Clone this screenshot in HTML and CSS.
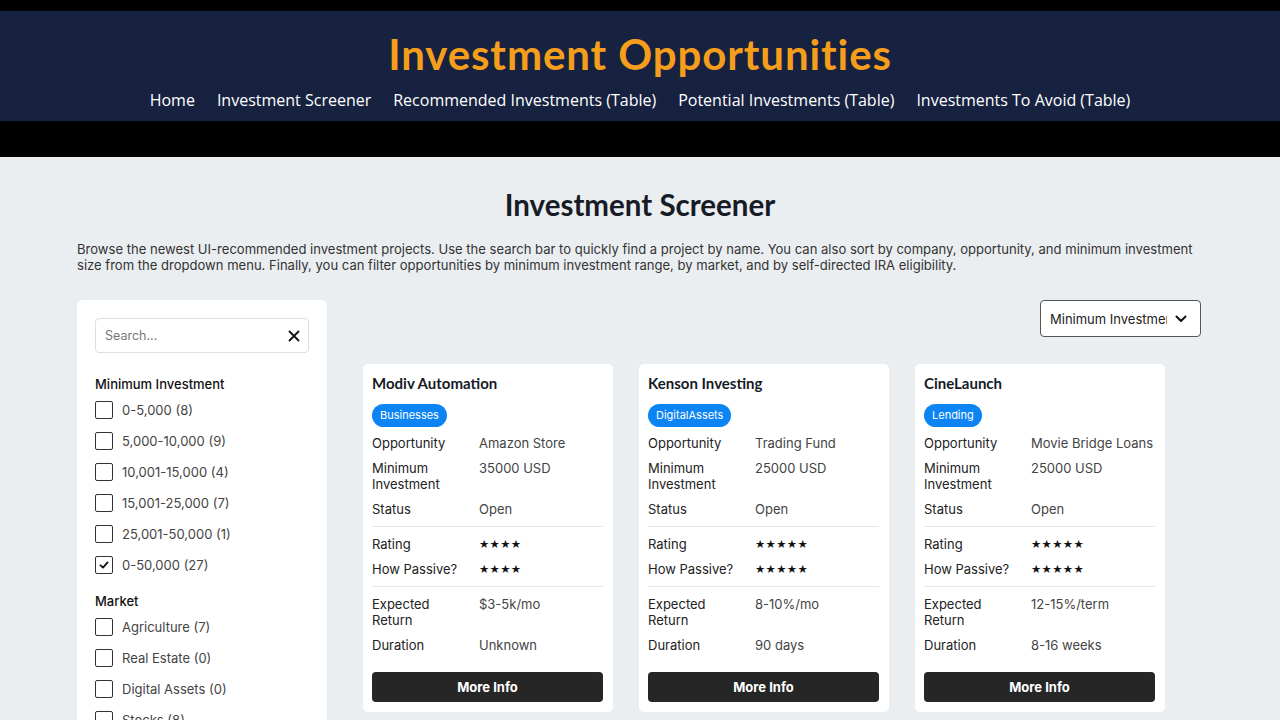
FILE: index.html
```html
<!DOCTYPE html>
<html lang="en">
<head>
<meta charset="utf-8">
<title>Investment Screener</title>
<link rel="stylesheet" href="styles.css">
</head>
<body>
<header class="site-header">
  <div class="topstrip"></div>
  <div class="brand-bar">
    <h1 class="brand-title">Investment Opportunities</h1>
    <nav class="main-nav">
      <a href="#">Home</a>
      <a href="#">Investment Screener</a>
      <a href="#">Recommended Investments (Table)</a>
      <a href="#">Potential Investments (Table)</a>
      <a href="#">Investments To Avoid (Table)</a>
    </nav>
  </div>
  <div class="bottomstrip"></div>
</header>

<main class="page">
  <h2 class="page-title">Investment Screener</h2>
  <p class="intro">Browse the newest UI-recommended investment projects. Use the search bar to quickly find a project by name. You can also sort by company, opportunity, and minimum investment size from the dropdown menu. Finally, you can filter opportunities by minimum investment range, by market, and by self-directed IRA eligibility.</p>

  <div class="layout">
    <aside class="filters">
      <div class="search">
        <span class="search-placeholder">Search...</span>
        <svg class="search-clear" width="12" height="12" viewBox="0 0 12 12"><path d="M1.5 1.5 L10.5 10.5 M10.5 1.5 L1.5 10.5" stroke="#111" stroke-width="1.8" stroke-linecap="round"/></svg>
      </div>

      <h3 class="filter-title">Minimum Investment</h3>
      <ul class="filter-list">
        <li><span class="box"></span>0-5,000 (8)</li>
        <li><span class="box"></span>5,000-10,000 (9)</li>
        <li><span class="box"></span>10,001-15,000 (4)</li>
        <li><span class="box"></span>15,001-25,000 (7)</li>
        <li><span class="box"></span>25,001-50,000 (1)</li>
        <li><span class="box checked"><svg width="12" height="12" viewBox="0 0 12 12"><path d="M2.5 6.3 L5 8.6 L9.6 3.4" fill="none" stroke="#111" stroke-width="1.8" stroke-linecap="round" stroke-linejoin="round"/></svg></span>0-50,000 (27)</li>
      </ul>

      <h3 class="filter-title market">Market</h3>
      <ul class="filter-list">
        <li><span class="box"></span>Agriculture (7)</li>
        <li><span class="box"></span>Real Estate (0)</li>
        <li><span class="box"></span>Digital Assets (0)</li>
        <li><span class="box"></span>Stocks (8)</li>
        <li><span class="box"></span>Lending (3)</li>
      </ul>
    </aside>

    <section class="results">
      <div class="toolbar">
        <div class="sort-select">
          <span class="sort-text">Minimum Investment</span>
          <svg width="12" height="8" viewBox="0 0 12 8"><path d="M1.5 1.5 L6 6 L10.5 1.5" fill="none" stroke="#111" stroke-width="2" stroke-linecap="round" stroke-linejoin="round"/></svg>
        </div>
      </div>

      <div class="cards">
        <article class="card">
          <h4 class="card-title">Modiv Automation</h4>
          <span class="badge">Businesses</span>
          <div class="row"><span class="label">Opportunity</span><span class="value">Amazon Store</span></div>
          <div class="row"><span class="label">Minimum Investment</span><span class="value">35000 USD</span></div>
          <div class="row"><span class="label">Status</span><span class="value">Open</span></div>
          <hr class="divider">
          <div class="row"><span class="label">Rating</span><span class="value stars">★★★★</span></div>
          <div class="row"><span class="label">How Passive?</span><span class="value stars">★★★★</span></div>
          <hr class="divider">
          <div class="row"><span class="label">Expected Return</span><span class="value">$3-5k/mo</span></div>
          <div class="row"><span class="label">Duration</span><span class="value">Unknown</span></div>
          <button class="more">More Info</button>
        </article>

        <article class="card">
          <h4 class="card-title">Kenson Investing</h4>
          <span class="badge">DigitalAssets</span>
          <div class="row"><span class="label">Opportunity</span><span class="value">Trading Fund</span></div>
          <div class="row"><span class="label">Minimum Investment</span><span class="value">25000 USD</span></div>
          <div class="row"><span class="label">Status</span><span class="value">Open</span></div>
          <hr class="divider">
          <div class="row"><span class="label">Rating</span><span class="value stars">★★★★★</span></div>
          <div class="row"><span class="label">How Passive?</span><span class="value stars">★★★★★</span></div>
          <hr class="divider">
          <div class="row"><span class="label">Expected Return</span><span class="value">8-10%/mo</span></div>
          <div class="row"><span class="label">Duration</span><span class="value">90 days</span></div>
          <button class="more">More Info</button>
        </article>

        <article class="card">
          <h4 class="card-title">CineLaunch</h4>
          <span class="badge">Lending</span>
          <div class="row"><span class="label">Opportunity</span><span class="value">Movie Bridge Loans</span></div>
          <div class="row"><span class="label">Minimum Investment</span><span class="value">25000 USD</span></div>
          <div class="row"><span class="label">Status</span><span class="value">Open</span></div>
          <hr class="divider">
          <div class="row"><span class="label">Rating</span><span class="value stars">★★★★★</span></div>
          <div class="row"><span class="label">How Passive?</span><span class="value stars">★★★★★</span></div>
          <hr class="divider">
          <div class="row"><span class="label">Expected Return</span><span class="value">12-15%/term</span></div>
          <div class="row"><span class="label">Duration</span><span class="value">8-16 weeks</span></div>
          <button class="more">More Info</button>
        </article>
      </div>
    </section>
  </div>
</main>
</body>
</html>
```
FILE: styles.css
```css
* { box-sizing: border-box; }
html, body { margin: 0; padding: 0; }
body {
  background: #ebeef0;
  font-family: "Inter", "Noto Sans", sans-serif;
  color: #222;
}

/* header */
.topstrip { height: 11px; background: #000; }
.bottomstrip { height: 36px; background: #000; }
.brand-bar {
  background: #172241;
  height: 110px;
  display: flex;
  flex-direction: column;
  align-items: center;
  padding-top: 18px;
}
.brand-title {
  margin: 0;
  font-family: "Lato", sans-serif;
  font-weight: 700;
  font-size: 42px;
  letter-spacing: 0.9px;
  line-height: 50px;
  color: #f59e1b;
}
.main-nav {
  display: flex;
  gap: 22px;
  margin-top: 10px;
}
.main-nav a {
  font-family: "Open Sans", sans-serif;
  font-size: 16px;
  line-height: 22px;
  color: #fff;
  text-decoration: none;
}

/* page */
.page {
  width: 1126px;
  margin: 0 auto;
  padding-top: 30px;
}
.page-title {
  margin: 0;
  text-align: center;
  font-family: "Lato", sans-serif;
  font-weight: 700;
  font-size: 29.5px;
  line-height: 36px;
  color: #161b26;
}
.intro {
  margin: 18px 0 0;
  font-size: 13.05px;
  line-height: 16px;
  color: #333;
}

.layout {
  display: flex;
  align-items: flex-start;
  margin-top: 27px;
}

/* filters */
.filters {
  width: 250px;
  flex: none;
  background: #fff;
  border-radius: 6px;
  padding: 18px 18px 20px;
}
.search {
  height: 35px;
  border: 1px solid #dcdfe3;
  border-radius: 4px;
  display: flex;
  align-items: center;
  justify-content: space-between;
  padding: 0 8px 0 9px;
}
.search-placeholder { font-size: 12.5px; color: #777; }
.filter-title {
  margin: 23px 0 9px;
  font-size: 13px;
  line-height: 16px;
  font-weight: 500;
  color: #111;
}
.filter-title.market { margin-top: 19px; }
.filter-list {
  list-style: none;
  margin: 0;
  padding: 0;
  display: flex;
  flex-direction: column;
  gap: 13px;
}
.filter-list li {
  display: flex;
  align-items: center;
  gap: 9px;
  font-size: 13px;
  line-height: 18px;
  color: #444;
}
.box {
  width: 18px;
  height: 18px;
  flex: none;
  border: 1.4px solid #333;
  border-radius: 2px;
  display: flex;
  align-items: center;
  justify-content: center;
}

/* results */
.results {
  flex: 1;
  padding-left: 36px;
  padding-right: 2px;
}
.toolbar { display: flex; justify-content: flex-end; }
.sort-select {
  width: 161px;
  height: 37px;
  border: 1px solid #555;
  border-radius: 4px;
  background: #fff;
  display: flex;
  align-items: center;
  padding: 0 13px 0 9px;
  gap: 8px;
}
.sort-text {
  flex: 1;
  overflow: hidden;
  white-space: nowrap;
  font-size: 13px;
  color: #222;
}
.cards {
  display: grid;
  grid-template-columns: repeat(3, 250px);
  gap: 26px;
  margin-top: 27px;
}
.card {
  background: #fff;
  border-radius: 5px;
  padding: 9px 10px 10px 9px;
  display: flex;
  flex-direction: column;
  align-items: flex-start;
}
.card-title {
  margin: 0;
  font-family: "Lato", sans-serif;
  font-weight: 700;
  font-size: 15px;
  line-height: 20px;
  color: #161b26;
}
.badge {
  margin-top: 11px;
  height: 23px;
  line-height: 23px;
  padding: 0 8px;
  border-radius: 12px;
  background: #0d84f4;
  color: #fff;
  font-size: 11px;
}
.row {
  width: 100%;
  display: grid;
  grid-template-columns: 107px 1fr;
  font-size: 13px;
  line-height: 16px;
  margin-top: 9px;
}
.badge + .row { margin-top: 8px; }
.label { color: #222; padding-right: 8px; }
.value { color: #444; }
.stars { font-family: "DejaVu Sans", sans-serif; font-size: 11.5px; color: #111; letter-spacing: 0.3px; }
.divider {
  width: 100%;
  border: 0;
  border-top: 1px solid #e4e6e8;
  margin: 9px 0 0;
}
.divider + .row { margin-top: 9px; }
.more {
  margin-top: 19px;
  width: 100%;
  height: 30px;
  border: 0;
  border-radius: 4px;
  background: #262626;
  color: #fff;
  font-family: "Inter", sans-serif;
  font-weight: 700;
  font-size: 13px;
}
```
